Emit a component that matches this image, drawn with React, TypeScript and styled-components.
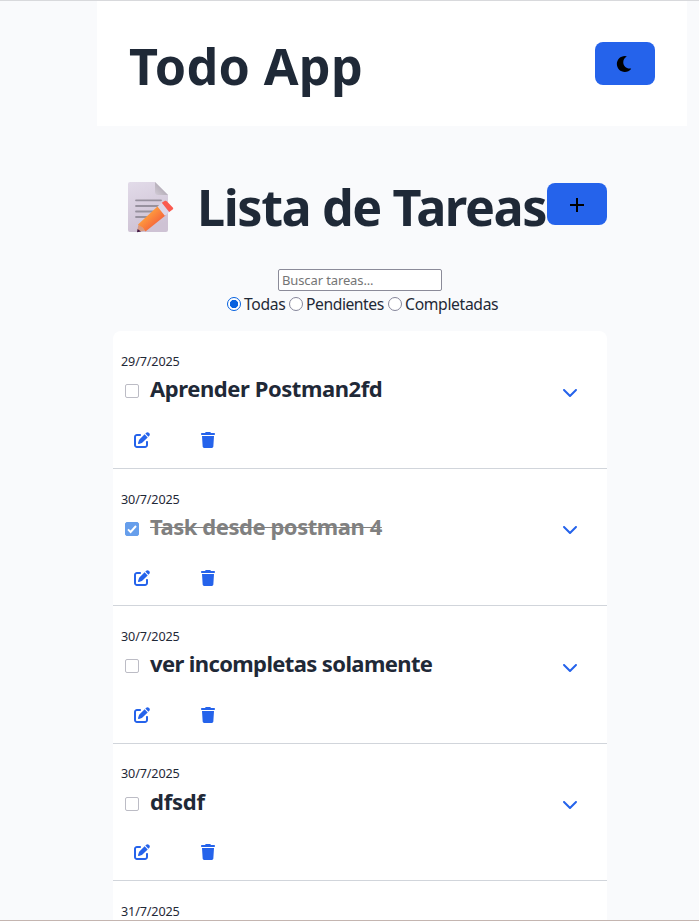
import React, { useState } from 'react';
import styled, { createGlobalStyle } from 'styled-components';
import { FaMoon } from 'react-icons/fa';
import { FaChevronDown, FaPenToSquare, FaTrash } from 'react-icons/fa6';

const GlobalStyle = createGlobalStyle`
  * { box-sizing: border-box; }
  body {
    margin: 0;
    height: 921px;
    overflow: hidden;
    background: #f9fafc;
    color: #1f2937;
    font-family: "Noto Sans", "Open Sans", sans-serif;
  }
`;

const Page = styled.div`
  height: 921px;
  overflow: hidden;
  padding-left: 97px;
  border-top: 1px solid #d8d9dc;
  border-bottom: 1px solid #c4b5b0;
`;

const Header = styled.header`
  width: 590px;
  height: 125px;
  padding: 0 32px;
  display: flex;
  justify-content: space-between;
  align-items: center;
  background: #fff;
`;

const Title = styled.h1<{ $spacing: number; $top?: number }>`
  margin: 0;
  padding-top: ${(p) => p.$top ?? 0}px;
  font-size: 50.3px;
  line-height: 68px;
  font-weight: 700;
  letter-spacing: ${(p) => p.$spacing}px;
  white-space: nowrap;
`;

const Button = styled.button<{ $height: number; $top?: number; $right?: number }>`
  width: 60px;
  height: ${(p) => p.$height}px;
  flex: none;
  padding: ${(p) => p.$top ?? 0}px ${(p) => p.$right ?? 0}px 0 0;
  border: 0;
  border-radius: 8px;
  display: flex;
  align-items: center;
  justify-content: center;
  background: #2563eb;
  color: #000;
  font-size: 16px;
`;

const Main = styled.main`
  width: 494px;
  margin-left: 16px;
`;

const ListHeader = styled.div`
  height: 68px;
  margin-top: 47px;
  display: flex;
  justify-content: space-between;
  align-items: center;
`;

const TitleGroup = styled.div`
  width: 434px;
  display: flex;
  align-items: center;
  padding-left: 14px;
`;

const Memo = styled.svg`
  flex: none;
  width: 48px;
  height: 52px;
  margin-right: 22px;
`;

const ButtonSlot = styled.div`
  padding-bottom: 6px;
`;

const Filters = styled.div`
  height: 90.4px;
  padding-top: 28px;
  display: flex;
  flex-direction: column;
  align-items: center;
`;

const Search = styled.input`
  width: 164px;
  height: 22px;
  padding: 1px 3px;
  border: 1px solid #8b8b99;
  border-radius: 2px;
  background: #fff;
  font-family: inherit;
  font-size: 13px;
  letter-spacing: -0.12px;
  outline: 0;
  &::placeholder { color: #757575; }
`;

const Radios = styled.div`
  display: flex;
  align-items: center;
  height: 26px;
  margin-left: 4px;
`;

const RadioLabel = styled.label<{ $width: number; $spacing: number }>`
  width: ${(p) => p.$width}px;
  display: flex;
  align-items: center;
  font-size: 15.7px;
  line-height: 22px;
  letter-spacing: ${(p) => p.$spacing}px;
  white-space: nowrap;
`;

const Radio = styled.input`
  appearance: none;
  flex: none;
  width: 14px;
  height: 14px;
  margin: 0 3.6px 0 0;
  border: 1px solid #85859a;
  border-radius: 50%;
  background: #fff;
  &:checked {
    border-color: #0560df;
    background: radial-gradient(circle, #0560df 3.8px, #fff 4.5px);
  }
`;

const List = styled.ul`
  margin: 0;
  padding: 0;
  list-style: none;
  border-radius: 8px;
  background: #fff;
`;

const Item = styled.li`
  height: 137.4px;
  padding: 19.8px 8px 0;
  border-bottom: 1px solid #d1d5db;
`;

const DateText = styled.div`
  height: 21px;
  font-size: 12.6px;
  line-height: 21px;
  letter-spacing: -0.13px;
`;

const TaskRow = styled.div`
  display: flex;
  align-items: center;
  height: 34px;
  padding: 0 21px 0 4px;
`;

const Check = styled.input`
  appearance: none;
  flex: none;
  width: 14px;
  height: 14px;
  margin: 4.4px 11px 0 0;
  border: 1px solid #bcbcc5;
  border-radius: 2px;
  background: #fff;
  &:checked {
    border-color: #669eeb;
    background: #669eeb url("data:image/svg+xml,%3Csvg xmlns='http://www.w3.org/2000/svg' viewBox='0 0 12 12'%3E%3Cpath d='M2 6.4L4.6 9L10 3' fill='none' stroke='white' stroke-width='1.9'/%3E%3C/svg%3E") center / 12px;
  }
`;

const TaskTitle = styled.div<{ $spacing: number }>`
  flex: 1;
  padding-bottom: 1.6px;
  font-size: 22px;
  line-height: 30px;
  font-weight: 700;
  letter-spacing: ${(p) => p.$spacing}px;
  white-space: nowrap;
`;

const TaskText = styled.span<{ $done: boolean }>`
  color: ${(p) => (p.$done ? '#808080' : '#1f2937')};
  text-decoration: ${(p) => (p.$done ? 'line-through 1px' : 'none')};
`;

const Toggle = styled.span`
  display: flex;
  padding-top: 5.8px;
  color: #2563eb;
  font-size: 16px;
`;

const Actions = styled.div`
  display: flex;
  gap: 50px;
  padding: 26px 0 0 13px;
  color: #2563eb;
  font-size: 16px;
`;

interface Task {
  date: string;
  title: string;
  done: boolean;
  spacing: number;
}

const tasks: Task[] = [
  { date: '29/7/2025', title: 'Aprender Postman2fd', done: false, spacing: -0.43 },
  { date: '30/7/2025', title: 'Task desde postman 4', done: true, spacing: -0.45 },
  { date: '30/7/2025', title: 'ver incompletas solamente', done: false, spacing: -0.62 },
  { date: '30/7/2025', title: 'dfsdf', done: false, spacing: -0.2 },
  { date: '31/7/2025', title: '', done: false, spacing: 0 },
];

const filters = [
  { name: 'Todas', width: 62, spacing: -0.35 },
  { name: 'Pendientes', width: 99, spacing: -0.47 },
  { name: 'Completadas', width: 110, spacing: -0.35 },
];

function MemoIcon() {
  return (
    <Memo viewBox="0 0 48 52">
      <defs>
        <linearGradient id="paper" x1="0" y1="0" x2="0.3" y2="1">
          <stop offset="0" stopColor="#e2dbe9" />
          <stop offset="1" stopColor="#cec2d4" />
        </linearGradient>
        <linearGradient id="fold" x1="1" y1="0" x2="0" y2="1">
          <stop offset="0.45" stopColor="#b5aeb8" />
          <stop offset="1" stopColor="#d3ccd7" />
        </linearGradient>
        <linearGradient id="pencil" x1="0" y1="0" x2="1" y2="1">
          <stop offset="0.3" stopColor="#ffa03e" />
          <stop offset="0.75" stopColor="#f4603b" />
        </linearGradient>
      </defs>
      <path d="M3 1H28L41 14V49Q41 51 39 51H3Q1 51 1 49V3Q1 1 3 1Z" fill="url(#paper)" />
      <path d="M28 1L41 14H31Q28 14 28 11Z" fill="url(#fold)" />
      <path d="M9 19.3H34M9 25H34M9 30.5H28M9 36H21" stroke="#97919e" strokeWidth="1.8" strokeLinecap="round" />
      <path d="M11.5 43L10 51L19 49.5Z" fill="#d89b83" />
      <path d="M10.6 48L10 51.2L14 50.5Z" fill="#3b1645" />
      <path d="M11 43.5L31 25L38.5 34.5L18.5 50.6Q16 46 11 43.5Z" fill="url(#pencil)" />
      <path d="M30.5 25.5L35 21.5L42.4 30.8L37.8 34.7Z" fill="#dcd6e8" />
      <path d="M34.8 21.8L38 19.8Q39 19.3 40 20.4L46 26.7Q46.7 27.6 45.7 28.4L42.2 31Z" fill="#fa5a50" />
    </Memo>
  );
}

function PlusIcon() {
  return (
    <svg width="14" height="14" viewBox="0 0 14 14">
      <path d="M7 0V14M0 7H14" stroke="currentColor" strokeWidth="2" />
    </svg>
  );
}

export default function App() {
  const [filter, setFilter] = useState('Todas');
  return (
    <>
      <GlobalStyle />
      <Page>
        <Header>
          <Title $spacing={0.3} $top={5}>Todo App</Title>
          <Button $height={43} $right={2} aria-label="Modo oscuro"><FaMoon /></Button>
        </Header>
        <Main>
          <ListHeader>
            <TitleGroup>
              <MemoIcon />
              <Title $spacing={-1.42}>Lista de Tareas</Title>
            </TitleGroup>
            <ButtonSlot>
              <Button $height={42} $top={2} aria-label="Agregar tarea"><PlusIcon /></Button>
            </ButtonSlot>
          </ListHeader>
          <Filters>
            <Search placeholder="Buscar tareas..." />
            <Radios>
              {filters.map((f) => (
                <RadioLabel key={f.name} $width={f.width} $spacing={f.spacing}>
                  <Radio type="radio" name="filter" checked={filter === f.name} onChange={() => setFilter(f.name)} />
                  {f.name}
                </RadioLabel>
              ))}
            </Radios>
          </Filters>
          <List>
            {tasks.map((t, i) => (
              <Item key={i}>
                <DateText>{t.date}</DateText>
                <TaskRow>
                  <Check type="checkbox" defaultChecked={t.done} />
                  <TaskTitle $spacing={t.spacing}>
                    <TaskText $done={t.done}>{t.title}</TaskText>
                  </TaskTitle>
                  <Toggle><FaChevronDown /></Toggle>
                </TaskRow>
                <Actions>
                  <FaPenToSquare />
                  <FaTrash />
                </Actions>
              </Item>
            ))}
          </List>
        </Main>
      </Page>
    </>
  );
}
